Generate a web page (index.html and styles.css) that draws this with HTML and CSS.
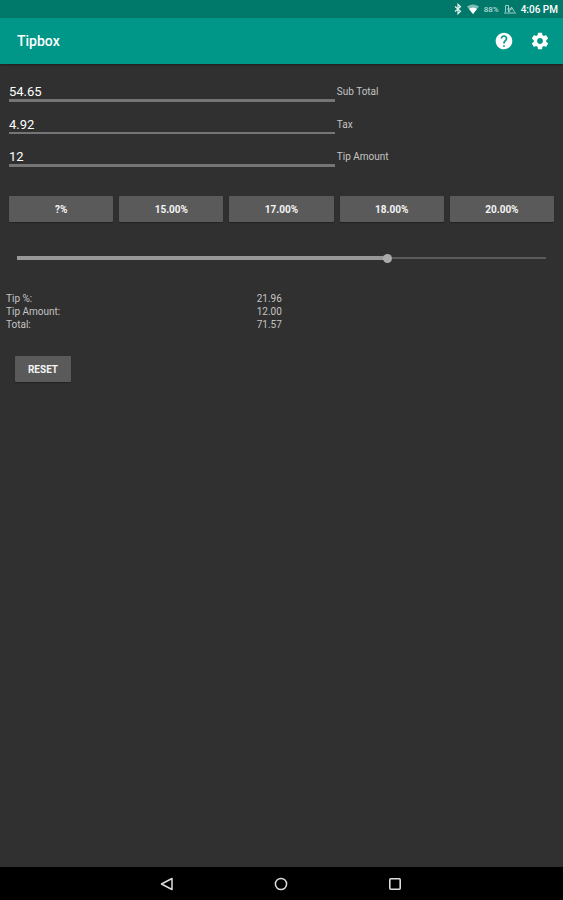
FILE: index.html
```
<!DOCTYPE html>
<html lang="en">
    <head>
        <meta charset="UTF-8" />
        <meta name="viewport" content="width=device-width, initial-scale=1.0" />
        <title>Tipbox</title>
        <link rel="stylesheet" href="styles.css">
    </head>
    <body>
        <div class="status-bar">
            <svg class="bluetooth" viewBox="0 0 8 12" width="8" height="12">
                <path d="M1 3.5 L6.5 8.3 L4 10.7 V1.3 L6.5 3.7 L1 8.5" fill="none" stroke="#e4f2f0" stroke-width="1.2" />
            </svg>
            <svg class="wifi" viewBox="0 0 12 10" width="12" height="10">
                <path d="M0 2.6 Q6 -1.6 12 2.6 L6 10 Z" fill="#7dbdb6" />
                <path d="M2 5 Q6 2 10 5 L6 10 Z" fill="#fff" />
            </svg>
            <span class="battery">88%</span>
            <svg class="signal" viewBox="0 0 12 10" width="12" height="10">
                <path d="M1.5 8 V1.5 H4.5 V8 M5 8 L7.5 3 L10.5 8 M3 5 H8 M0 9 H12" fill="none" stroke="#9fcfc9" stroke-width="1" />
            </svg>
            <span class="clock">4:06 PM</span>
        </div>
        <header class="app-bar">
            <h1>Tipbox</h1>
            <button type="button" class="icon-button" aria-label="Help">
                <svg viewBox="0 0 24 24" width="20" height="20">
                    <path fill="#fff" d="M12 2C6.48 2 2 6.48 2 12s4.48 10 10 10 10-4.48 10-10S17.52 2 12 2zm1 17h-2v-2h2v2zm2.07-7.75l-.9.92C13.45 12.9 13 13.5 13 15h-2v-.5c0-1.1.45-2.1 1.17-2.83l1.24-1.26c.37-.36.59-.86.59-1.41 0-1.1-.9-2-2-2s-2 .9-2 2H8c0-2.21 1.79-4 4-4s4 1.79 4 4c0 .88-.36 1.68-.93 2.25z" />
                </svg>
            </button>
            <button type="button" class="icon-button" aria-label="Settings">
                <svg viewBox="0 0 24 24" width="20" height="20">
                    <path fill="#fff" d="M19.43 12.98c.04-.32.07-.64.07-.98s-.03-.66-.07-.98l2.11-1.65c.19-.15.24-.42.12-.64l-2-3.46c-.12-.22-.39-.3-.61-.22l-2.49 1c-.52-.4-1.08-.73-1.69-.98l-.38-2.65C14.46 2.18 14.25 2 14 2h-4c-.25 0-.46.18-.49.42l-.38 2.65c-.61.25-1.17.59-1.69.98l-2.49-1c-.23-.09-.49 0-.61.22l-2 3.46c-.13.22-.07.49.12.64l2.11 1.65c-.04.32-.07.65-.07.98s.03.66.07.98l-2.11 1.65c-.19.15-.24.42-.12.64l2 3.46c.12.22.39.3.61.22l2.49-1c.52.4 1.08.73 1.69.98l.38 2.65c.03.24.24.42.49.42h4c.25 0 .46-.18.49-.42l.38-2.65c.61-.25 1.17-.59 1.69-.98l2.49 1c.23.09.49 0 .61-.22l2-3.46c.12-.22.07-.49-.12-.64l-2.11-1.65zM12 15.5c-1.93 0-3.5-1.57-3.5-3.5s1.57-3.5 3.5-3.5 3.5 1.57 3.5 3.5-1.57 3.5-3.5 3.5z" />
                </svg>
            </button>
        </header>

        <main>
            <form id="tipForm">
                <div class="fields">
                    <div class="field">
                        <input type="text" id="sub_total" name="sub_total" inputmode="decimal" value="54.65" />
                        <label for="sub_total">Sub Total</label>
                    </div>
                    <div class="field field-thin">
                        <input type="text" id="tax" name="tax" inputmode="decimal" value="4.92" />
                        <label for="tax">Tax</label>
                    </div>
                    <div class="field">
                        <input type="text" id="tip_amount" name="tip_amount" inputmode="decimal" value="12" />
                        <label for="tip_amount">Tip Amount</label>
                    </div>
                </div>

                <div class="presets">
                    <button type="button">?%</button>
                    <button type="button">15.00%</button>
                    <button type="button">17.00%</button>
                    <button type="button">18.00%</button>
                    <button type="button">20.00%</button>
                </div>

                <div class="slider">
                    <input type="range" min="0" max="1000" value="703" aria-label="Tip percent" />
                </div>

                <table class="results">
                    <tr>
                        <th scope="row">Tip %:</th>
                        <td>21.96</td>
                    </tr>
                    <tr>
                        <th scope="row">Tip Amount:</th>
                        <td>12.00</td>
                    </tr>
                    <tr>
                        <th scope="row">Total:</th>
                        <td>71.57</td>
                    </tr>
                </table>

                <button type="reset" class="reset">RESET</button>
            </form>
        </main>

        <nav class="nav-bar">
            <button type="button" aria-label="Back">
                <svg viewBox="0 0 14 14" width="14" height="14">
                    <path d="M12 1.5 V12.5 L1.5 7 Z" fill="none" stroke="#ddd" stroke-width="1.5" stroke-linejoin="round" />
                </svg>
            </button>
            <button type="button" aria-label="Home">
                <svg viewBox="0 0 14 14" width="14" height="14">
                    <circle cx="7" cy="7" r="5.6" fill="none" stroke="#ddd" stroke-width="1.5" />
                </svg>
            </button>
            <button type="button" aria-label="Recent apps">
                <svg viewBox="0 0 14 14" width="14" height="14">
                    <rect x="1.8" y="1.8" width="10.4" height="10.4" rx="1" fill="none" stroke="#ddd" stroke-width="1.6" />
                </svg>
            </button>
        </nav>
    </body>
</html>
```
FILE: styles.css
```
* {
    box-sizing: border-box;
}
body {
    display: flex;
    flex-direction: column;
    min-height: 100vh;
    margin: 0;
    font-family: Roboto, "Liberation Sans", sans-serif;
    font-size: 10px;
    color: #c4c4c4;
    background-color: #303030;
}
button,
input {
    font-family: inherit;
    margin: 0;
}
button {
    padding: 0;
    border: none;
    cursor: pointer;
}
svg {
    display: block;
}
.status-bar {
    display: flex;
    align-items: center;
    justify-content: flex-end;
    gap: 5px;
    height: 18px;
    padding-right: 5px;
    background-color: #00796b;
}
.battery {
    font-size: 8px;
    font-weight: 500;
    color: #b5dad5;
}
.clock {
    font-weight: 500;
    color: #fff;
}
.app-bar {
    display: flex;
    align-items: center;
    gap: 16px;
    height: 46px;
    padding: 0 13px 0 17px;
    background-color: #009688;
    box-shadow: 0 1px 2px rgba(0, 0, 0, 0.4);
}
.app-bar h1 {
    flex: 1;
    margin: 0;
    font-size: 14px;
    font-weight: 500;
    color: #fff;
}
.icon-button {
    background: none;
}
main {
    flex: 1;
    padding: 19px 9px;
}
.fields {
    display: grid;
    gap: 14px;
}
.field {
    display: grid;
    grid-template-columns: 3fr 2fr;
    gap: 2px;
}
.field input {
    width: 100%;
    height: 19px;
    padding: 0;
    border: none;
    border-bottom: 3px solid #757575;
    border-radius: 0;
    outline: none;
    font-size: 13px;
    line-height: 16px;
    color: #fff;
    background: none;
}
.field label {
    line-height: 18px;
}
.field-thin input {
    height: 18px;
    border-bottom-width: 2px;
}
.presets {
    display: grid;
    grid-template-columns: repeat(5, 1fr);
    gap: 6px;
    margin-top: 29px;
}
.presets button,
.reset {
    height: 26px;
    border-radius: 1px;
    font-size: 10px;
    font-weight: 700;
    color: #f4f4f4;
    background-color: #5a5a5b;
    box-shadow: 0 1px 1px rgba(0, 0, 0, 0.3);
}
.slider {
    margin: 30px 8px 0;
}
.slider input {
    display: block;
    width: 100%;
    height: 12px;
    appearance: none;
    -webkit-appearance: none;
    background:
        linear-gradient(#989898, #989898) left center / 70% 4px no-repeat,
        linear-gradient(#5a5a5a, #5a5a5a) left center / 100% 2px no-repeat;
}
.slider input::-webkit-slider-thumb {
    -webkit-appearance: none;
    width: 9px;
    height: 9px;
    border-radius: 50%;
    background-color: #aaa;
}
.slider input::-moz-range-thumb {
    width: 9px;
    height: 9px;
    border: none;
    border-radius: 50%;
    background-color: #aaa;
}
.results {
    width: 100%;
    margin: 28px 0 0 -3px;
    border-collapse: collapse;
    table-layout: fixed;
    line-height: 13px;
}
.results th,
.results td {
    padding: 0;
    font-weight: 400;
    text-align: left;
}
.results th {
    width: 46%;
}
.reset {
    display: block;
    width: 56px;
    margin: 25px 0 0 6px;
}
.nav-bar {
    display: flex;
    justify-content: center;
    gap: 100px;
    height: 33px;
    padding-right: 2px;
    background-color: #000;
}
.nav-bar button {
    background: none;
}
```
